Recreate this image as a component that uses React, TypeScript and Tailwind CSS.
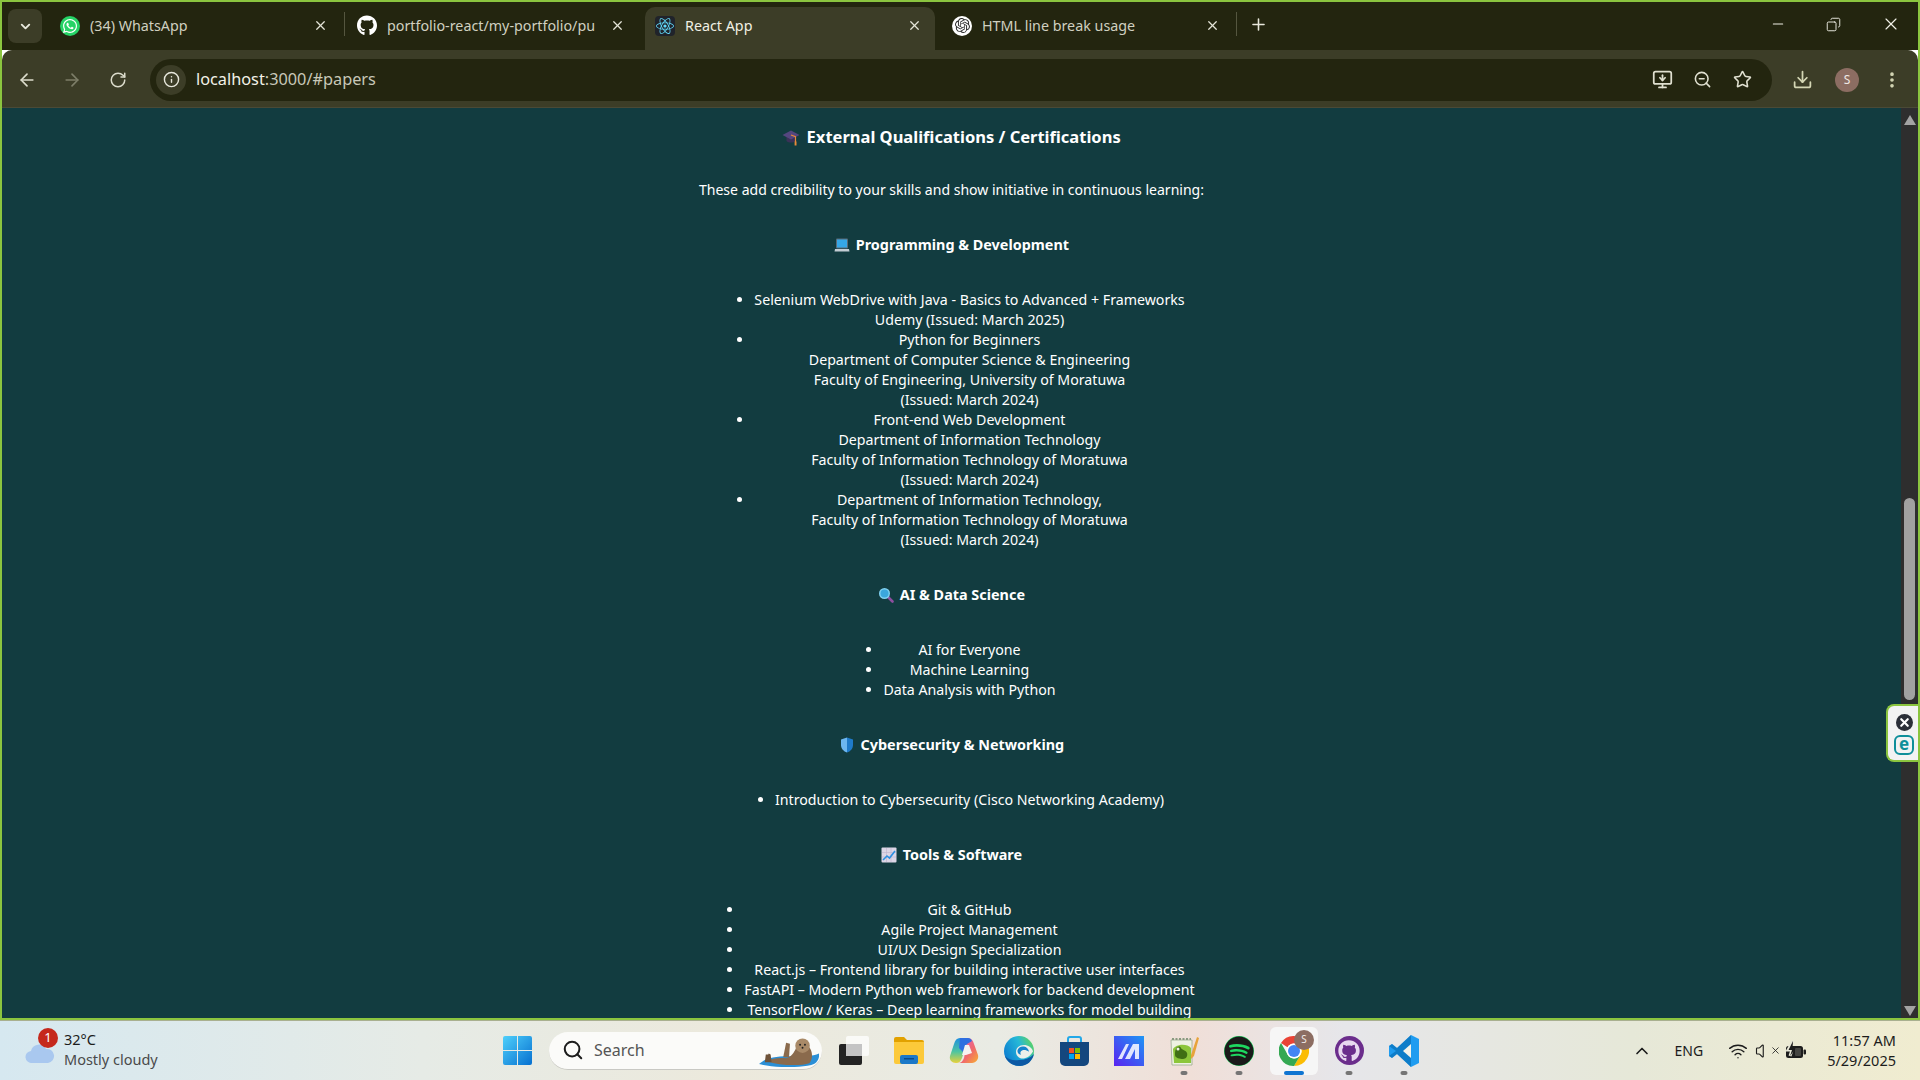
import {
  ArrowLeft,
  ArrowRight,
  ChevronDown,
  ChevronUp,
  Copy,
  Download,
  Info,
  Minus,
  MonitorDown,
  MoreVertical,
  Plus,
  RotateCw,
  Search,
  Star,
  Volume,
  Wifi,
  X,
  ZoomOut,
} from "lucide-react";
import { FaGithub, FaReact, FaSpotify, FaWhatsapp } from "react-icons/fa";
import { SiOpenai } from "react-icons/si";

const programming = [
  ["Selenium WebDrive with Java - Basics to Advanced + Frameworks", "Udemy (Issued: March 2025)"],
  [
    "Python for Beginners",
    "Department of Computer Science & Engineering",
    "Faculty of Engineering, University of Moratuwa",
    "(Issued: March 2024)",
  ],
  [
    "Front-end Web Development",
    "Department of Information Technology",
    "Faculty of Information Technology of Moratuwa",
    "(Issued: March 2024)",
  ],
  [
    "Department of Information Technology,",
    "Faculty of Information Technology of Moratuwa",
    "(Issued: March 2024)",
  ],
];
const aiData = [["AI for Everyone"], ["Machine Learning"], ["Data Analysis with Python"]];
const cyber = [["Introduction to Cybersecurity (Cisco Networking Academy)"]];
const tools = [
  ["Git & GitHub"],
  ["Agile Project Management"],
  ["UI/UX Design Specialization"],
  ["React.js – Frontend library for building interactive user interfaces"],
  ["FastAPI – Modern Python web framework for backend development"],
  ["TensorFlow / Keras – Deep learning frameworks for model building"],
];

function CapEmoji() {
  return (
    <svg viewBox="0 0 18 18" className="inline-block w-[18px] h-[18px] align-[-3px]">
      <path d="M4.5 8v5c2 2 7 2 9 0V8z" fill="#3a3158" />
      <path d="M0.5 7 9 2.500 17.500 7 9 11.500z" fill="#54467f" />
      <path d="M9 7l4.500 1.600v5.500" stroke="#e8893a" strokeWidth="1.200" fill="none" />
      <rect x="12.600" y="13.500" width="1.900" height="4" fill="#e8893a" />
    </svg>
  );
}

function LaptopEmoji() {
  return (
    <svg viewBox="0 0 16 16" className="inline-block w-4 h-4 align-[-3px]">
      <rect x="2" y="1.500" width="12" height="10" rx="1" fill="#5b6b78" />
      <rect x="3" y="2.500" width="10" height="8" fill="#35a7e6" />
      <path d="M1 12h14l.5 2.500H.5z" fill="#c2ccd3" />
    </svg>
  );
}

function LensEmoji() {
  return (
    <svg viewBox="0 0 16 16" className="inline-block w-4 h-4 align-[-3px]">
      <path d="M10 10l4.500 4.500" stroke="#8d4f9f" strokeWidth="2.600" strokeLinecap="round" />
      <circle cx="6.500" cy="6.500" r="5.500" fill="#7fd0f0" />
      <circle cx="6.500" cy="6.500" r="4" fill="#3ba7dd" />
    </svg>
  );
}

function ShieldEmoji() {
  return (
    <svg viewBox="0 0 16 16" className="inline-block w-4 h-4 align-[-3px]">
      <path d="M8 0.500l6 2v5.500c0 3.500-2.600 6.500-6 7.500z" fill="#1f7ac9" />
      <path d="M8 0.500L2 2.500V8c0 3.500 2.600 6.500 6 7.500z" fill="#6cb6f0" />
    </svg>
  );
}

function ChartEmoji() {
  return (
    <svg viewBox="0 0 16 16" className="inline-block w-4 h-4 align-[-3px]">
      <rect x="0.500" y="0.500" width="15" height="15" rx="1" fill="#dcd6e6" />
      <path d="M1 5.500h14M1 10h14M5.500 1v14M10 1v14" stroke="#bdb4cc" strokeWidth="0.600" />
      <path d="M2 13l4-4 2.500 2L14 4" stroke="#2c8fe0" strokeWidth="1.600" fill="none" />
    </svg>
  );
}

function CertList({ items }: { items: string[][] }) {
  return (
    <ul className="mt-[35px] inline-block list-disc pl-9 text-center align-top">
      {items.map((lines, i) => (
        <li key={i}>
          {lines.map((line, j) => (
            <div key={j}>{line}</div>
          ))}
        </li>
      ))}
    </ul>
  );
}

function Heading({ icon, children }: { icon: React.ReactNode; children: React.ReactNode }) {
  return (
    <h4 className="mt-[35px] font-bold text-[14.4px]">
      {icon} <span className="ml-[2px]">{children}</span>
    </h4>
  );
}

function Tab({
  icon,
  title,
  active,
  className,
}: {
  icon: React.ReactNode;
  title: string;
  active?: boolean;
  className: string;
}) {
  return (
    <div
      className={`flex items-center h-[43px] self-end pb-[6px] rounded-t-[10px] ${
        active ? "bg-[#3c3d27] text-[#f0f0e4]" : "text-[#d0d0c0]"
      } ${className}`}
    >
      <div className="w-5 h-5 flex items-center justify-center shrink-0">{icon}</div>
      <div className="ml-[10px] flex-1 overflow-hidden whitespace-nowrap text-[14.3px]">{title}</div>
      <X size={15} strokeWidth={2} className="ml-2 shrink-0 text-[#e4e4d8]" />
    </div>
  );
}

function TabStrip() {
  return (
    <div className="flex items-center h-12 bg-[#23250f] pl-[6px]">
      <div className="w-[34px] h-[34px] rounded-lg bg-[#3c3d27] flex items-center justify-center text-[#e8e8dc]">
        <ChevronDown size={15} strokeWidth={3} />
      </div>
      <Tab
        className="ml-1 w-[298px] pl-[14px] pr-[16px]"
        title="(34) WhatsApp"
        icon={
          <div className="w-5 h-5 rounded-full bg-[#25d366] flex items-center justify-center">
            <FaWhatsapp size={16} className="text-white" />
          </div>
        }
      />
      <div className="w-px h-6 bg-[#55563f] -mt-1" />
      <Tab
        className="w-[296px] pl-[12px] pr-[16px]"
        title="portfolio-react/my-portfolio/pu"
        icon={<FaGithub size={21} className="text-white" />}
      />
      <Tab
        active
        className="ml-[4px] w-[290px] pl-[10px] pr-[13px]"
        title="React App"
        icon={
          <div className="w-5 h-5 rounded-sm bg-[#20232a] flex items-center justify-center">
            <FaReact size={18} className="text-[#61dafb]" />
          </div>
        }
      />
      <Tab
        className="ml-[3px] w-[298px] pl-[14px] pr-[16px]"
        title="HTML line break usage"
        icon={
          <div className="w-5 h-5 rounded-full bg-white flex items-center justify-center">
            <SiOpenai size={15} className="text-[#2b2b2b]" />
          </div>
        }
      />
      <div className="w-px h-6 bg-[#55563f] -mt-1" />
      <Plus size={19} strokeWidth={2} className="ml-3 -mt-1 text-[#e8e8dc]" />
      <div className="ml-auto flex items-center text-[#f0f0e6] -mt-1">
        <Minus size={16} strokeWidth={1.6} />
        <Copy size={15} strokeWidth={1.5} className="ml-[40px] -scale-x-100" />
        <X size={20} strokeWidth={1.4} className="ml-[40px] mr-[17px]" />
      </div>
    </div>
  );
}

function Toolbar() {
  return (
    <div className="flex items-center h-[58px] pt-[2px] bg-[#3c3d27] rounded-t-[10px] border-b border-[#4a4a36] text-[#dcdccc]">
      <ArrowLeft size={20} strokeWidth={2} className="ml-[15px]" />
      <ArrowRight size={20} strokeWidth={2} className="ml-[25px] text-[#7d7e68]" />
      <RotateCw size={18} strokeWidth={2} className="ml-[27px]" />
      <div className="ml-[23px] flex items-center w-[1622px] h-[42px] rounded-full bg-[#23250f]">
        <div className="ml-[6px] w-[30px] h-[30px] rounded-full bg-[#3c3d27] flex items-center justify-center">
          <Info size={17} strokeWidth={2} className="text-[#e8e8dc]" />
        </div>
        <div className="ml-[10px] text-[16.3px]">
          <span className="text-[#f2f2e8]">localhost</span>
          <span className="text-[#c8c8b8]">:3000/#papers</span>
        </div>
        <div className="ml-auto flex items-center text-[#e0e0d0]">
          <MonitorDown size={21} strokeWidth={2} />
          <ZoomOut size={19} strokeWidth={2} className="ml-[20px]" />
          <Star size={19} strokeWidth={2} className="ml-[21px] mr-[20px]" />
        </div>
      </div>
      <Download size={21} strokeWidth={2} className="ml-[20px] text-[#d4d6b4]" />
      <div className="ml-[22px] w-6 h-6 rounded-full bg-[#8c6d62] flex items-center justify-center text-[12px] text-[#f0e8e4]">
        S
      </div>
      <MoreVertical size={20} strokeWidth={2.4} className="ml-[23px] text-[#d4d6b4]" />
    </div>
  );
}

function Scrollbar() {
  return (
    <div className="w-[17px] shrink-0 bg-[#2e2e2e] flex flex-col items-center">
      <div className="mt-[7px] w-0 h-0 border-x-[6px] border-x-transparent border-b-[10px] border-b-[#a3a3a3]" />
      <div className="mt-[373px] w-[11px] h-[202px] rounded-full bg-[#a1a1a1]" />
      <div className="mt-auto mb-[2px] w-0 h-0 border-x-[6px] border-x-transparent border-t-[10px] border-t-[#a3a3a3]" />
    </div>
  );
}

function EsetWidget() {
  return (
    <div className="absolute right-0 top-[596px] w-[32px] h-[58px] bg-[#f3f3f3] border-2 border-r-0 border-[#8bc53f] rounded-l-lg flex flex-col items-center justify-center gap-[4px] pl-[2px] pt-[2px]">
      <div className="w-[17px] h-[17px] rounded-full bg-[#2b2f38] flex items-center justify-center">
        <X size={13} strokeWidth={4} className="text-white" />
      </div>
      <div className="w-[20px] h-[20px] rounded-[6px] border-2 border-[#0f8f9a] flex items-center justify-center text-[17px] leading-none font-bold text-[#0f8f9a] pb-[3px]">
        e
      </div>
    </div>
  );
}

function Content() {
  return (
    <div className="relative flex flex-1 min-h-0 overflow-hidden bg-[#123c40]">
      <div className="flex-1 min-w-0 pt-[17px] text-center text-white text-[14.2px] leading-[20px] font-['Noto_Sans',sans-serif]">
        <h3 className="text-[16.5px] leading-6 font-bold">
          <CapEmoji /> <span className="ml-[2px]">External Qualifications / Certifications</span>
        </h3>
        <p className="mt-[31px] text-[14.05px]">These add credibility to your skills and show initiative in continuous learning:</p>
        <Heading icon={<LaptopEmoji />}>Programming &amp; Development</Heading>
        <CertList items={programming} />
        <Heading icon={<LensEmoji />}>AI &amp; Data Science</Heading>
        <CertList items={aiData} />
        <Heading icon={<ShieldEmoji />}>Cybersecurity &amp; Networking</Heading>
        <CertList items={cyber} />
        <Heading icon={<ChartEmoji />}>Tools &amp; Software</Heading>
        <CertList items={tools} />
      </div>
      <Scrollbar />
      <EsetWidget />
    </div>
  );
}

function WindowsLogo() {
  return (
    <svg viewBox="0 0 29 29" className="w-[29px] h-[29px]">
      <defs>
        <linearGradient id="win" x1="0" y1="0" x2="1" y2="1">
          <stop offset="0" stopColor="#4fd0fb" />
          <stop offset="1" stopColor="#0670d0" />
        </linearGradient>
      </defs>
      <path d="M0 2a2 2 0 0 1 2-2h12v14H0zM15 0h12a2 2 0 0 1 2 2v12H15zM0 15h14v14H2a2 2 0 0 1-2-2zM15 15h14v12a2 2 0 0 1-2 2H15z" fill="url(#win)" />
    </svg>
  );
}

function Otter() {
  return (
    <svg viewBox="0 0 62 30" className="w-[60px] h-[29px]">
      <path d="M0 27c6-6 16-8 30-8s26 0 32-3c1 6-3 11-8 12-14 3-38 3-54-1z" fill="#2a8fd6" />
      <path d="M8 24c6-3 14-4 20-3 6-2 8-6 10-10 3-4 12-5 15 0 3 5 2 12-1 15-8 3-30 3-44-2z" fill="#8a6a4c" />
      <circle cx="45" cy="8" r="7.500" fill="#a98a68" />
      <path d="M25 20l3-15 4 1-1 14z" fill="#8a6a4c" />
      <path d="M6 25l1-8 2.500 0 .5-1 2 1 1 8z" fill="#6f5339" />
      <circle cx="42.500" cy="7" r="1" fill="#222" />
      <circle cx="47.500" cy="7" r="1" fill="#222" />
      <circle cx="45" cy="10" r="1" fill="#222" />
    </svg>
  );
}

function TaskView() {
  return (
    <svg viewBox="0 0 30 29" className="w-[30px] h-[29px]">
      <rect x="0" y="8" width="23" height="21" rx="2" fill="#232323" />
      <rect x="7" y="0" width="23" height="20" rx="2" fill="#ffffff" fillOpacity="0.75" />
      <rect x="7" y="8" width="16" height="12" fill="#c4c4c4" />
    </svg>
  );
}

function Folder() {
  return (
    <svg viewBox="0 0 30 27" className="w-[30px] h-[27px]">
      <path d="M0 2a2 2 0 0 1 2-2h8l3 3h15a2 2 0 0 1 2 2v3H0z" fill="#e2a100" />
      <path d="M0 5h30v20a2 2 0 0 1-2 2H2a2 2 0 0 1-2-2z" fill="#fcc93a" />
      <rect x="6" y="18" width="18" height="9" rx="2" fill="#1b78c8" />
      <rect x="10" y="21" width="10" height="1.500" fill="#0a4a88" />
    </svg>
  );
}

function Copilot() {
  return (
    <svg viewBox="0 0 30 28" className="w-[30px] h-7">
      <defs>
        <linearGradient id="cpa" x1="0" y1="0" x2="0" y2="1">
          <stop offset="0" stopColor="#1d8fe0" />
          <stop offset="0.55" stopColor="#4fc5a0" />
          <stop offset="1" stopColor="#e8d23a" />
        </linearGradient>
        <linearGradient id="cpb" x1="0" y1="0" x2="1" y2="1">
          <stop offset="0" stopColor="#e05ad0" />
          <stop offset="0.6" stopColor="#f06a6a" />
          <stop offset="1" stopColor="#f7b030" />
        </linearGradient>
      </defs>
      <path d="M11 1h8l-6 20c-1 3-3 5-6 5-4 0-7-3-6-7L5 7c1-4 3-6 6-6z" fill="url(#cpa)" />
      <path d="M19 1c3 0 5 2 6 6l4 11c1 4-2 8-6 8H9c3 0 5-2 6-5z" fill="url(#cpb)" />
      <path d="M11 1h8c2 0 3 1 4 3l-5 3-4 8-4-4z" fill="#2f6fe0" />
      <path d="M16 8h4l3 8-6 2h-4z" fill="#f6f2f0" />
    </svg>
  );
}

function Edge() {
  return (
    <svg viewBox="0 0 30 30" className="w-[30px] h-[30px]">
      <defs>
        <linearGradient id="edg" x1="0" y1="0.6" x2="1" y2="0.1">
          <stop offset="0" stopColor="#0d7fd0" />
          <stop offset="0.55" stopColor="#25b8d8" />
          <stop offset="1" stopColor="#66d84a" />
        </linearGradient>
      </defs>
      <circle cx="15" cy="15" r="15" fill="url(#edg)" />
      <path d="M30 18c-1.500 7-7 12-14 12C9 30 3 26 1 20c4 4 9 5 14 4 6 0 11-2 15-6z" fill="#0c59a4" />
      <path d="M29 15.500c-1-4-5-6.500-9-6.500-5 0-8 3-8 7 0 3 2 5.500 5 6.500 5 .5 9-2 12-7z" fill="#eef0ea" />
      <path d="M25 15.800c-2-1.500-4.500-2-6.500-1.500-2 .6-2.800 2.500-1.500 4.500-2.500-.5-4-2.300-3.500-4.500.8-3 3.500-4.300 6.500-3.800 2.500.4 4.500 2.500 5 5.300z" fill="#1483cc" />
    </svg>
  );
}

function Store() {
  return (
    <svg viewBox="0 0 29 30" className="w-[29px] h-[30px]">
      <path d="M8 7V3a2 2 0 0 1 2-2h9a2 2 0 0 1 2 2v4" stroke="#23a8e8" strokeWidth="2" fill="none" />
      <path d="M0 6h29v19a5 5 0 0 1-5 5H5a5 5 0 0 1-5-5z" fill="#14477e" />
      <rect x="9" y="12" width="5" height="5" fill="#f25022" />
      <rect x="15" y="12" width="5" height="5" fill="#7fba00" />
      <rect x="9" y="18" width="5" height="5" fill="#00a4ef" />
      <rect x="15" y="18" width="5" height="5" fill="#ffb900" />
    </svg>
  );
}

function Appian() {
  return (
    <svg viewBox="0 0 30 30" className="w-[30px] h-[30px]">
      <defs>
        <linearGradient id="mnd" x1="0" y1="1" x2="1" y2="0">
          <stop offset="0" stopColor="#5a22f0" />
          <stop offset="1" stopColor="#1e96f5" />
        </linearGradient>
      </defs>
      <rect width="30" height="30" fill="url(#mnd)" />
      <path d="M4 23 12 8h3L8 23zM11 23l8-15h6v15h-4V13l-5 10z" fill="#f2f4ff" fillOpacity="0.9" />
    </svg>
  );
}

function NotepadPP() {
  return (
    <svg viewBox="0 0 29 30" className="w-[29px] h-[30px]">
      <path d="M1 4h21v25H2z" fill="#eef2e2" stroke="#9aa890" strokeWidth="0.800" />
      <path d="M2 3h19" stroke="#8a9a80" strokeWidth="2" strokeDasharray="2 1.500" />
      <path d="M3 13c3-5 14-6 18-1v15H4z" fill="#8cc63a" />
      <path d="M6 13c1-3 4-3 5-1s5 2 6 5-1 6-4 6-8-1-8-4 0-4 1-6z" fill="#3f6e14" />
      <circle cx="8" cy="13" r="1.500" fill="#eef2e2" />
      <path d="M21 19 27 1l2 1-5 18-3 3z" fill="#e8a33a" />
    </svg>
  );
}

function Chrome() {
  return (
    <svg viewBox="0 0 30 30" className="w-[30px] h-[30px]">
      <path d="M15 0a15 15 0 0 1 13 7.500H15a7.500 7.500 0 0 0-6.500 3.700L2 7A15 15 0 0 1 15 0z" fill="#ea4335" />
      <path d="M28 7.500A15 15 0 0 1 15 30l6.500-11.200A7.500 7.500 0 0 0 21.500 11z" fill="#fbbc04" />
      <path d="M2 7l6.500 11.300A7.500 7.500 0 0 0 21.500 19L15 30A15 15 0 0 1 2 7z" fill="#34a853" />
      <circle cx="15" cy="15" r="7.500" fill="#fff" />
      <circle cx="15" cy="15" r="6" fill="#4285f4" />
    </svg>
  );
}

function VSCode() {
  return (
    <svg viewBox="0 0 30 32" className="w-[30px] h-8">
      <path d="M22 0l8 4v24l-8 4-14-13-5 4-3-2v-10l3-2 5 4z" fill="#1f9cf0" />
      <path d="M22 0v32L8 19l-5 4-3-2 7-5-7-5 3-2 5 4z" fill="#0065a9" fillOpacity="0.55" />
      <path d="M22 9l-8 7 8 7z" fill="#f4f3ea" />
    </svg>
  );
}

function BatteryIcon() {
  return (
    <svg viewBox="0 0 22 20" className="w-[22px] h-5">
      <rect x="1" y="5" width="17" height="12" rx="2.500" fill="#1c1c1c" />
      <rect x="18.500" y="8.500" width="2.500" height="5" rx="1" fill="#1c1c1c" />
      <path d="M8 0 3 9h4l-2 6" stroke="#e8e8d8" strokeWidth="3" fill="none" />
      <path d="M8 0 3.500 9H7l-2 6 6-8H7.500z" fill="#1c1c1c" />
      <rect x="10" y="7" width="6" height="8" rx="1" fill="#e8e8d8" fillOpacity="0.2" />
    </svg>
  );
}

function Dock({ children, dot }: { children: React.ReactNode; dot?: boolean }) {
  return (
    <div className="relative w-12 h-12 flex items-center justify-center">
      {children}
      {dot && <div className="absolute bottom-0 left-1/2 -translate-x-1/2 w-[7px] h-[4px] rounded-full bg-[#757575]" />}
    </div>
  );
}

function Taskbar() {
  return (
    <div className="flex items-center h-[60px] shrink-0 border-t border-[#a9b090] bg-[linear-gradient(90deg,#d6e8f0_0%,#e6ebe6_22%,#ece9dc_38%,#e9ebe4_52%,#f0dfd8_62%,#e6e6ea_70%,#e6e8d8_85%,#f0ecd0_100%)] font-['Noto_Sans',sans-serif]">
      <div className="relative w-[503px] shrink-0 flex items-center pl-[64px] h-full">
        <svg viewBox="0 0 30 22" className="absolute left-[25px] top-[20px] w-[30px] h-[22px]">
          <path d="M7 22a6 6 0 0 1-1-12 8 8 0 0 1 15-2 7 7 0 0 1 2 14z" fill="#a9c8ef" />
        </svg>
        <div className="absolute left-[38px] top-[7px] w-5 h-5 rounded-full bg-[#c5281c] flex items-center justify-center text-[13px] text-white">
          1
        </div>
        <div className="-mt-[4px] text-[14.5px] leading-[20px]">
          <div className="text-[#1c1c1c]">32°C</div>
          <div className="text-[#4a4a4a]">Mostly cloudy</div>
        </div>
      </div>
      <WindowsLogo />
      <div className="relative ml-[17px] w-[273px] h-[38px] rounded-full bg-[#fbfbf9] border-b border-[#c9c9c4] flex items-center pl-[13px]">
        <Search size={22} strokeWidth={2.2} className="text-[#1c1c1c]" />
        <span className="ml-[10px] text-[16px] text-[#555]">Search</span>
        <div className="absolute right-[3px] bottom-[2px]">
          <Otter />
        </div>
      </div>
      <div className="ml-[8px] flex items-center gap-[7px]">
        <Dock>
          <TaskView />
        </Dock>
        <Dock>
          <Folder />
        </Dock>
        <Dock>
          <Copilot />
        </Dock>
        <Dock>
          <Edge />
        </Dock>
        <Dock>
          <Store />
        </Dock>
        <Dock>
          <Appian />
        </Dock>
        <Dock dot>
          <NotepadPP />
        </Dock>
        <Dock dot>
          <div className="w-[30px] h-[30px] rounded-full bg-[#1ed760] flex items-center justify-center">
            <FaSpotify size={30} className="text-[#1a1a1a]" />
          </div>
        </Dock>
        <div className="relative w-12 h-12 flex items-center justify-center rounded-md bg-[#f6f6f6]">
          <Chrome />
          <div className="absolute right-[4px] top-[3px] w-5 h-5 rounded-full bg-[#8c6d62] flex items-center justify-center text-[10px] text-[#f2ebe8]">
            S
          </div>
          <div className="absolute bottom-0 left-1/2 -translate-x-1/2 w-5 h-[4px] rounded-full bg-[#0f74d1]" />
        </div>
        <Dock dot>
          <div className="w-[29px] h-[29px] rounded-full bg-[#6b2d8c] flex items-center justify-center">
            <FaGithub size={22} className="text-[#e8d8f0]" />
          </div>
        </Dock>
        <Dock dot>
          <VSCode />
        </Dock>
      </div>
      <div className="ml-auto flex items-center text-[#1c1c1c]">
        <ChevronUp size={20} strokeWidth={2} />
        <span className="ml-[23px] text-[14px]">ENG</span>
        <Wifi size={20} strokeWidth={1.7} className="ml-[25px]" />
        <Volume size={18} strokeWidth={1.5} className="ml-[7px]" />
        <X size={11} strokeWidth={1.8} className="-ml-[3px]" />
        <div className="ml-[4px]">
          <BatteryIcon />
        </div>
        <div className="ml-[20px] mr-[24px] -mt-[1px] text-right text-[14.5px] leading-[20px]">
          <div>11:57 AM</div>
          <div>5/29/2025</div>
        </div>
      </div>
    </div>
  );
}

export default function App() {
  return (
    <div className="w-[1920px] h-[1080px] flex flex-col overflow-hidden font-['Noto_Sans',sans-serif]">
      <div className="flex-1 min-h-0 flex flex-col border-2 border-[#8bc53f]">
        <TabStrip />
        <Toolbar />
        <Content />
      </div>
      <Taskbar />
    </div>
  );
}
